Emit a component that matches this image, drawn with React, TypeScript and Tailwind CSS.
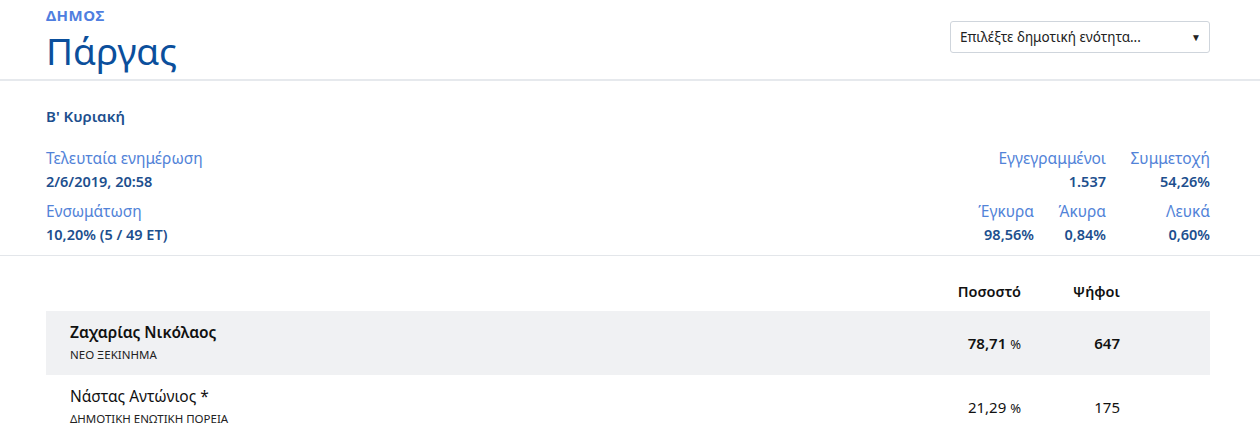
const FONT = "font-['Noto_Sans','Open_Sans',sans-serif]";

const candidates = [
  { name: 'Ζαχαρίας Νικόλαος', party: 'ΝΕΟ ΞΕΚΙΝΗΜΑ', pct: '78,71', votes: '647', lead: true },
  { name: 'Νάστας Αντώνιος *', party: 'ΔΗΜΟΤΙΚΗ ΕΝΩΤΙΚΗ ΠΟΡΕΙΑ', pct: '21,29', votes: '175', lead: false },
];

function Stat({ label, value, w }: { label: string; value: string; w: string }) {
  return (
    <div className={`${w} text-right`}>
      <div className="text-[15.5px] leading-[22px] text-[#5283d8]">{label}</div>
      <div className="text-[14.5px] leading-[24px] font-semibold text-[#1d4f8e]">{value}</div>
    </div>
  );
}

export default function App() {
  return (
    <div className={`${FONT} w-[1260px] h-[447px] bg-white overflow-hidden`}>
      <header className="h-[81px] border-b-2 border-[#e6e9ed] pl-[46px] pr-[50px] flex items-start justify-between">
        <div className="pt-[6px]">
          <div className="text-[15px] leading-[19px] font-bold uppercase tracking-[0.5px] text-[#4f7ee0]">Δημος</div>
          <h1 className="mt-[1px] text-[37px] leading-[50px] text-[#0b4f9c]">Πάργας</h1>
        </div>
        <div className="mt-[21px] w-[260px] h-[32px] border border-[#cfd5dc] rounded-[3px] flex items-center justify-between pl-[9px] pr-[8px] text-[13.5px] text-[#222]">
          <span>Επιλέξτε δημοτική ενότητα...</span>
          <span className="text-[10px]">▼</span>
        </div>
      </header>

      <section className="pl-[46px] pr-[50px] pt-[24px] pb-[9px] border-b border-[#e3e6ea]">
        <div className="text-[15px] leading-[22px] font-semibold text-[#1d4f8e]">Β' Κυριακή</div>
        <div className="mt-[20px] flex justify-between">
          <div>
            <div className="text-[15.5px] leading-[22px] text-[#5283d8]">Τελευταία ενημέρωση</div>
            <div className="text-[14.5px] leading-[24px] font-semibold text-[#1d4f8e]">2/6/2019, 20:58</div>
          </div>
          <div className="flex">
            <Stat label="Εγγεγραμμένοι" value="1.537" w="w-[160px]" />
            <Stat label="Συμμετοχή" value="54,26%" w="w-[104px]" />
          </div>
        </div>
        <div className="mt-[7px] flex justify-between">
          <div>
            <div className="text-[15.5px] leading-[22px] text-[#5283d8]">Ενσωμάτωση</div>
            <div className="text-[14.5px] leading-[24px] font-semibold text-[#1d4f8e]">10,20% (5 / 49 ΕΤ)</div>
          </div>
          <div className="flex">
            <Stat label="Έγκυρα" value="98,56%" w="w-[88px]" />
            <Stat label="Άκυρα" value="0,84%" w="w-[72px]" />
            <Stat label="Λευκά" value="0,60%" w="w-[104px]" />
          </div>
        </div>
      </section>

      <div className="pl-[46px] pr-[50px] pt-[17px]">
        <div className="flex h-[38px] items-center text-[14.5px] font-semibold text-[#111]">
          <div className="flex-1" />
          <div className="w-[120px] text-right">Ποσοστό</div>
          <div className="w-[99px] text-right">Ψήφοι</div>
          <div className="w-[90px]" />
        </div>
        {candidates.map(c => (
          <div key={c.name} className={`flex items-center h-[64px] ${c.lead ? 'bg-[#f0f1f3]' : ''}`}>
            <div className="flex-1 self-start pl-[24px] pt-[10px]">
              <div className={`text-[15.5px] leading-[22px] text-[#111] ${c.lead ? 'font-semibold' : ''}`}>{c.name}</div>
              <div className="text-[11.5px] leading-[24px] uppercase text-[#222]">{c.party}</div>
            </div>
            <div className={`w-[120px] text-right text-[15px] text-[#111] ${c.lead ? 'font-semibold' : ''}`}>
              {c.pct} <span className="text-[13px] font-normal">%</span>
            </div>
            <div className={`w-[99px] text-right text-[15px] text-[#111] ${c.lead ? 'font-semibold' : ''}`}>{c.votes}</div>
            <div className="w-[90px]" />
          </div>
        ))}
      </div>
    </div>
  );
}
